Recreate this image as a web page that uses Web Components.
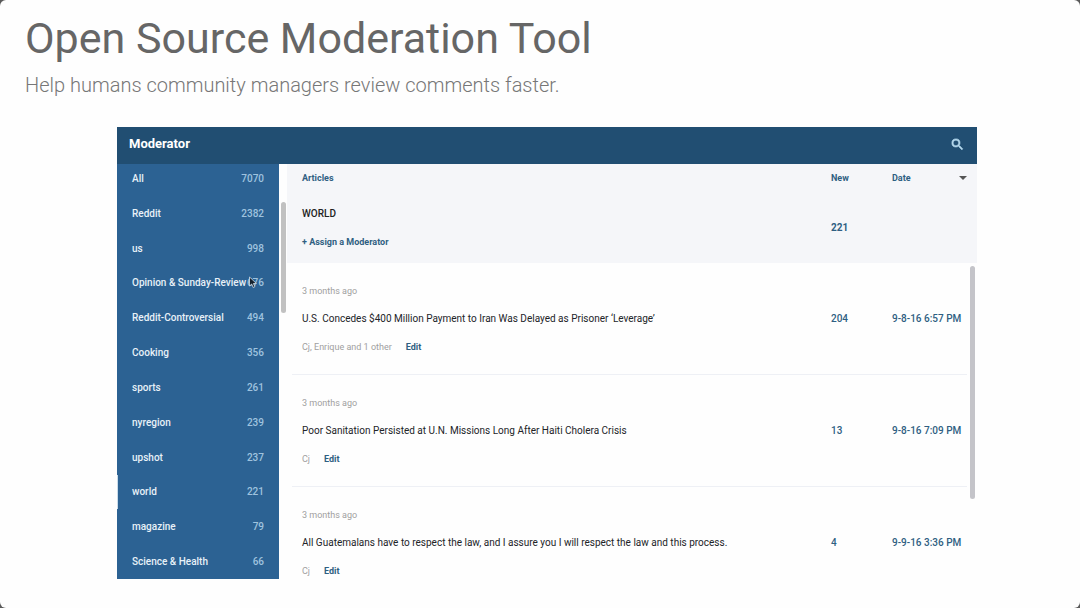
<!DOCTYPE html>
<html lang="en">
<head>
<meta charset="utf-8">
<title>Open Source Moderation Tool</title>
<style>
  body {
    margin: 0;
    background: #5a5a5a;
    font-family: Roboto, "Liberation Sans", sans-serif;
  }
</style>
</head>
<body>
<slide-page>
  <slide-title slot="title">
    Open Source Moderation Tool
    <span slot="subtitle">Help humans community managers review comments faster.</span>
  </slide-title>
  <moderator-app>
    <section-nav slot="nav">
      <section-link count="7070">All</section-link>
      <section-link count="2382">Reddit</section-link>
      <section-link count="998">us</section-link>
      <section-link count="676">Opinion &amp; Sunday-Review</section-link>
      <section-link count="494">Reddit-Controversial</section-link>
      <section-link count="356">Cooking</section-link>
      <section-link count="261">sports</section-link>
      <section-link count="239">nyregion</section-link>
      <section-link count="237">upshot</section-link>
      <section-link count="221" active>world</section-link>
      <section-link count="79">magazine</section-link>
      <section-link count="66">Science &amp; Health</section-link>
    </section-nav>
    <article-table section="WORLD" count="221"></article-table>
  </moderator-app>
</slide-page>

<script>
class SlidePage extends HTMLElement {
    constructor() {
        super();
        this.attachShadow({ mode: 'open' }).innerHTML = /*html*/`
        <style>
        :host {
            display: flex;
            flex-direction: column;
            gap: 27px;
            box-sizing: border-box;
            min-height: 100vh;
            padding: 12px 103px 29px 117px;
            background: #fefefe;
            border-radius: 6px;
        }

        ::slotted([slot="title"]) {
            margin: 0 -92px;
        }
        </style>
        <slot name="title"></slot>
        <slot></slot>
        `;
    }
}

class SlideTitle extends HTMLElement {
    constructor() {
        super();
        this.attachShadow({ mode: 'open' }).innerHTML = /*html*/`
        <style>
        :host {
            display: block;
        }

        h1 {
            margin: 0;
            font-size: 43px;
            font-weight: 400;
            line-height: 52px;
            color: #666;
        }

        p {
            margin: 6px 0 0;
            font-size: 20px;
            font-weight: 300;
            line-height: 30px;
            color: #777;
        }
        </style>
        <h1><slot></slot></h1>
        <p><slot name="subtitle"></slot></p>
        `;
    }
}

class ModeratorApp extends HTMLElement {
    constructor() {
        super();
        this.attachShadow({ mode: 'open' }).innerHTML = /*html*/`
        <style>
        :host {
            display: block;
        }

        header {
            display: flex;
            align-items: center;
            justify-content: space-between;
            box-sizing: border-box;
            height: 37px;
            padding: 0 12px 3px;
            background: #214e72;
            color: #fff;
        }

        h2 {
            margin: 0;
            font-size: 13px;
            font-weight: 700;
            line-height: 16px;
        }

        button {
            display: flex;
            padding: 0;
            border: 0;
            background: none;
            color: #b5d9ee;
        }

        .columns {
            display: grid;
            grid-template-columns: 162px 1fr;
        }
        </style>
        <header>
            <h2>Moderator</h2>
            <button aria-label="Search">
                <svg width="15" height="15" viewBox="0 0 24 24"><path fill="currentColor" d="M15.500 14h-.79l-.28-.27A6.470 6.470 0 0 0 16 9.500 6.500 6.500 0 1 0 9.500 16c1.610 0 3.090-.59 4.230-1.570l.27.28v.79l5 4.990L20.490 19l-4.990-5zm-6 0C7.010 14 5 11.990 5 9.500S7.010 5 9.500 5 14 7.010 14 9.500 11.990 14 9.500 14z" stroke="currentColor"></path></svg>
            </button>
        </header>
        <div class="columns">
            <slot name="nav"></slot>
            <slot></slot>
        </div>
        `;
    }
}

class SectionNav extends HTMLElement {
    constructor() {
        super();
        this.attachShadow({ mode: 'open' }).innerHTML = /*html*/`
        <style>
        :host {
            display: block;
            position: relative;
            background: #2c6293;
        }

        nav {
            display: flex;
            flex-direction: column;
            justify-content: space-between;
            box-sizing: border-box;
            height: 100%;
            padding: 7px 0 9px;
        }

        .thumb {
            position: absolute;
            top: 38px;
            right: -7px;
            width: 5px;
            height: 111px;
            border-radius: 3px;
            background: #c1c1c1;
        }

        .pointer {
            position: absolute;
            top: 112px;
            left: 131px;
        }
        </style>
        <nav aria-label="Sections"><slot></slot></nav>
        <div class="thumb"></div>
        <svg class="pointer" width="10" height="13" viewBox="0 0 10 13"><path d="M1.500 1v9l2.200-2 1.500 3.500 1.700-.8-1.500-3.200h3z" fill="#14202c" stroke="#d5e2ec" stroke-width=".8"></path></svg>
        `;
    }
}

class SectionLink extends HTMLElement {
    constructor() {
        super();
        this.attachShadow({ mode: 'open' }).innerHTML = /*html*/`
        <style>
        :host {
            display: block;
        }

        a {
            display: flex;
            justify-content: space-between;
            padding: 0 15px;
            font-size: 10px;
            font-weight: 500;
            line-height: 16px;
            color: #e8f1f8;
            text-decoration: none;
        }

        .count {
            color: #9fc3df;
        }

        :host([active]) a {
            box-shadow: inset 1px 0 #c9dbe9;
            margin: -9px 0;
            padding-top: 9px;
            padding-bottom: 9px;
        }
        </style>
        <a href="#"><slot></slot><span class="count"></span></a>
        `;
    }

    connectedCallback() {
        this.shadowRoot.querySelector('.count').textContent = this.getAttribute('count');
    }
}

const articles = [
    {
        age: '3 months ago',
        title: 'U.S. Concedes $400 Million Payment to Iran Was Delayed as Prisoner ‘Leverage’',
        moderators: 'Cj, Enrique and 1 other',
        count: 204,
        date: '9-8-16 6:57 PM',
    },
    {
        age: '3 months ago',
        title: 'Poor Sanitation Persisted at U.N. Missions Long After Haiti Cholera Crisis',
        moderators: 'Cj',
        count: 13,
        date: '9-8-16 7:09 PM',
    },
    {
        age: '3 months ago',
        title: 'All Guatemalans have to respect the law, and I assure you I will respect the law and this process.',
        moderators: 'Cj',
        count: 4,
        date: '9-9-16 3:36 PM',
    },
];

class ArticleTable extends HTMLElement {
    constructor() {
        super();
        this.attachShadow({ mode: 'open' });
    }

    connectedCallback() {
        this.shadowRoot.innerHTML = /*html*/`
        <style>
        :host {
            display: block;
            position: relative;
            padding-left: 8px;
            font-size: 10px;
            line-height: 16px;
            color: #2f5f82;
        }

        table {
            width: 100%;
            border-collapse: collapse;
            table-layout: fixed;
        }

        th, td {
            padding: 0;
            text-align: left;
            font-weight: 700;
        }

        th:first-child, td:first-child {
            padding-left: 15px;
        }

        .new {
            width: 61px;
        }

        .date {
            width: 85px;
        }

        thead, .section {
            background: #f5f6f9;
        }

        thead th {
            height: 28px;
            font-size: 9px;
        }

        .sort {
            display: flex;
            align-items: center;
            justify-content: space-between;
            width: 75px;
            padding: 0;
            border: 0;
            background: none;
            font: inherit;
            color: inherit;
        }

        .section td {
            height: 71px;
        }

        .section h3 {
            margin: 0 0 12px;
            font-size: 10px;
            font-weight: 500;
            color: #222;
        }

        .assign, .age, .moderators {
            font-size: 9px;
        }

        a {
            color: inherit;
            text-decoration: none;
        }

        .article td {
            height: 112px;
            background: linear-gradient(#eef0f5, #eef0f5) 0 100% / 100% 1px no-repeat;
        }

        .article td + td {
            font-weight: 500;
        }

        .article td:first-child {
            background-position: 5px 100%;
        }

        .article td:last-child {
            background-size: 75px 1px;
        }

        .article:last-child td {
            height: 73px;
            padding-top: 19px;
            background: none;
        }

        .age {
            font-weight: 400;
            color: #a0a0a0;
        }

        .title {
            margin: 12px 0;
            font-weight: 400;
            color: #222428;
            white-space: nowrap;
        }

        .moderators {
            display: flex;
            gap: 14px;
            font-weight: 400;
            color: #a0a0a0;
        }

        .moderators a {
            font-weight: 700;
            color: #2f5f82;
        }

        .thumb {
            position: absolute;
            top: 102px;
            right: 2px;
            width: 5px;
            height: 233px;
            border-radius: 3px;
            background: #c4c4c9;
        }
        </style>
        <table>
            <thead>
                <tr>
                    <th>Articles</th>
                    <th class="new">New</th>
                    <th class="date">
                        <button class="sort">Date
                            <svg width="8" height="4" viewBox="0 0 8 4"><path fill="#555" d="M0 0h8L4 4z"></path></svg>
                        </button>
                    </th>
                </tr>
            </thead>
            <tbody>
                <tr class="section">
                    <td>
                        <h3>${this.getAttribute('section')}</h3>
                        <a class="assign" href="#">+ Assign a Moderator</a>
                    </td>
                    <td>${this.getAttribute('count')}</td>
                    <td></td>
                </tr>
                ${articles.map((article) => /*html*/`
                <tr class="article">
                    <td>
                        <div class="age">${article.age}</div>
                        <div class="title">${article.title}</div>
                        <div class="moderators">${article.moderators} <a href="#">Edit</a></div>
                    </td>
                    <td>${article.count}</td>
                    <td>${article.date}</td>
                </tr>`).join('')}
            </tbody>
        </table>
        <div class="thumb"></div>
        `;
    }
}

customElements.define('slide-page', SlidePage);
customElements.define('slide-title', SlideTitle);
customElements.define('moderator-app', ModeratorApp);
customElements.define('section-nav', SectionNav);
customElements.define('section-link', SectionLink);
customElements.define('article-table', ArticleTable);
</script>
</body>
</html>
